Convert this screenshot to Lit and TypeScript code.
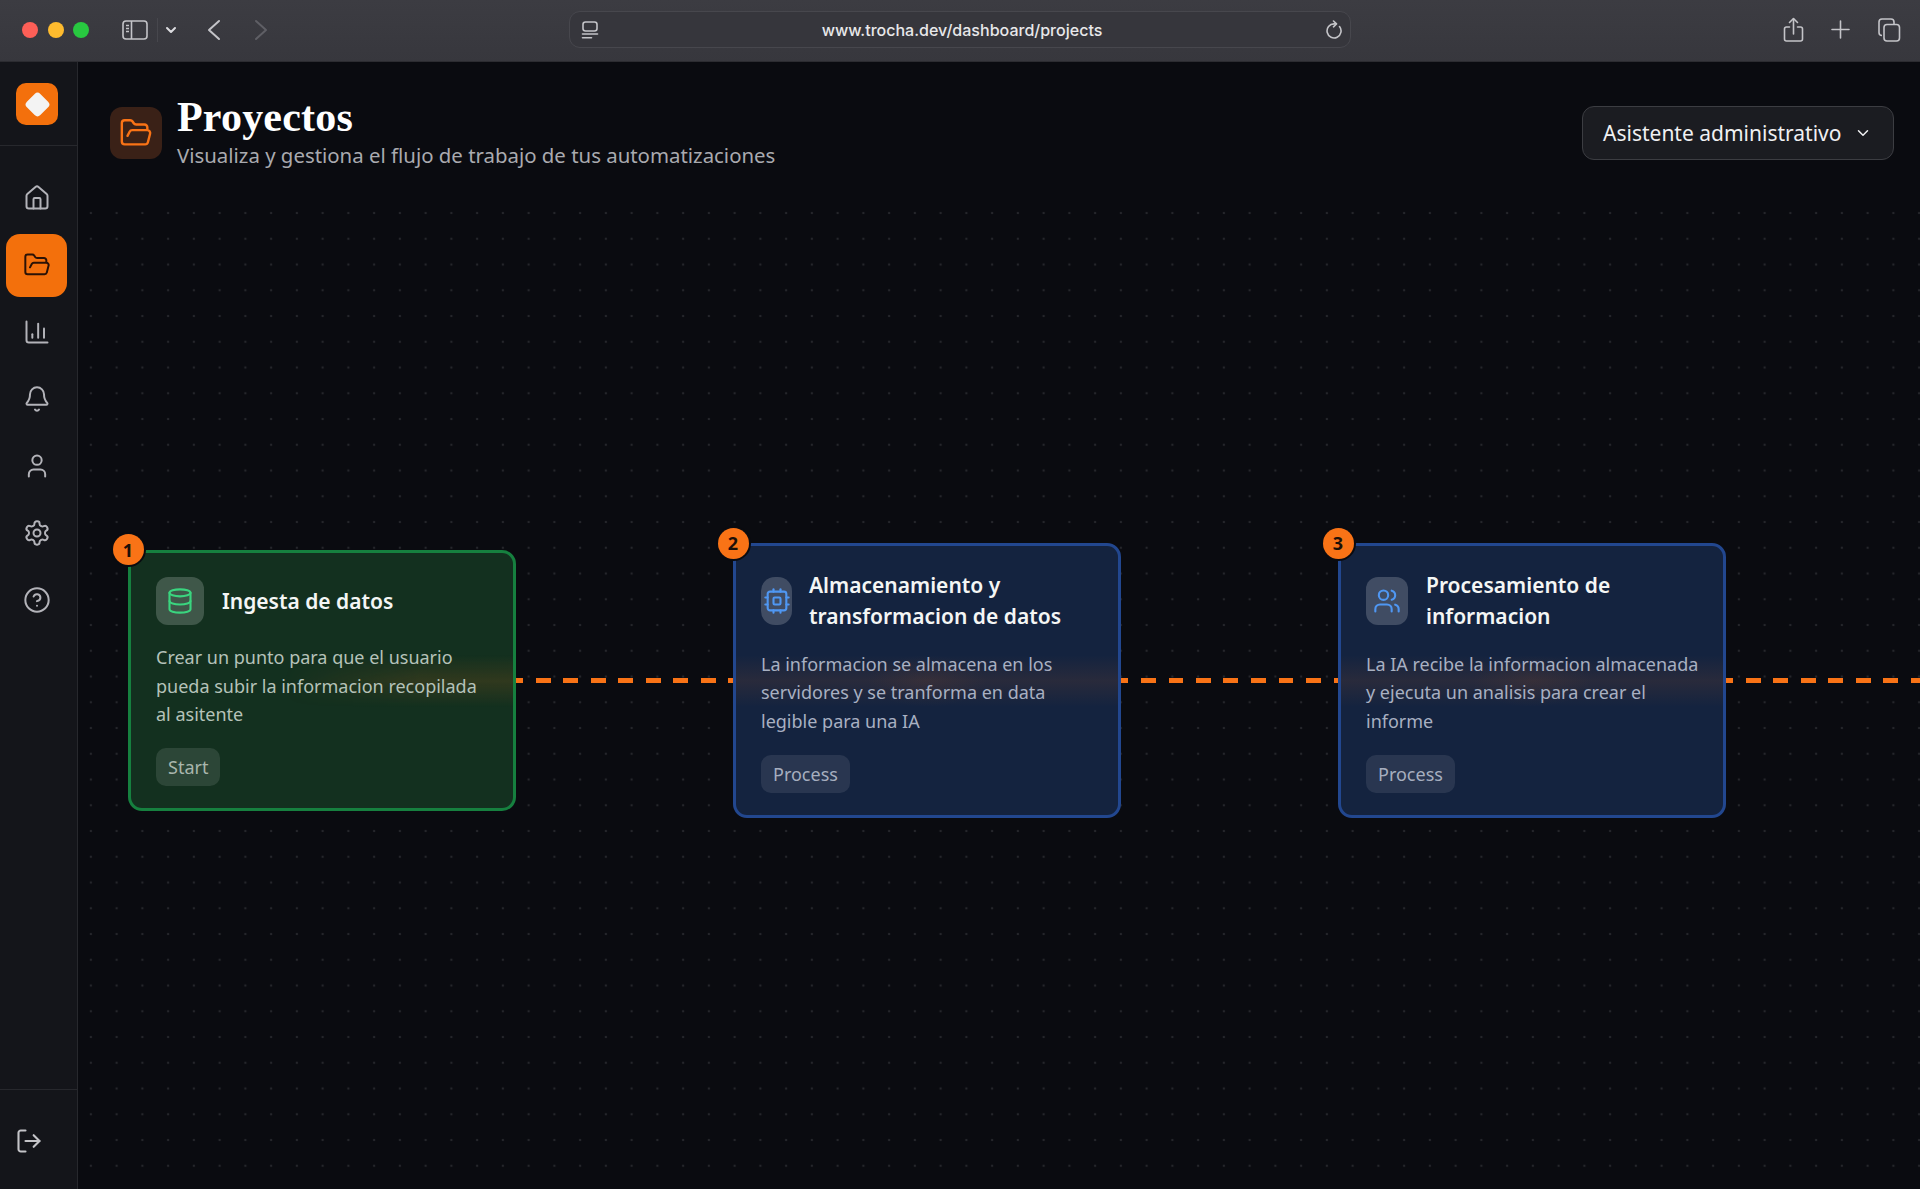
import { LitElement, html, css, svg } from "lit";
import { customElement } from "lit/decorators.js";

const ic = (body: unknown, cls = "") => html`<svg class="ic ${cls}" viewBox="0 0 24 24" fill="none" stroke="currentColor" stroke-width="2" stroke-linecap="round" stroke-linejoin="round">${body}</svg>`;

const folder = svg`<path d="m6 14 1.5-2.9A2 2 0 0 1 9.24 10H20a2 2 0 0 1 1.94 2.5l-1.54 6a2 2 0 0 1-1.95 1.5H4a2 2 0 0 1-2-2V5a2 2 0 0 1 2-2h3.9a2 2 0 0 1 1.69.9l.81 1.2a2 2 0 0 0 1.67.9H18a2 2 0 0 1 2 2v2"/>`;
const house = svg`<path d="M15 21v-8a1 1 0 0 0-1-1h-4a1 1 0 0 0-1 1v8"/><path d="M3 10a2 2 0 0 1 .709-1.528l7-5.999a2 2 0 0 1 2.582 0l7 5.999A2 2 0 0 1 21 10v9a2 2 0 0 1-2 2H5a2 2 0 0 1-2-2z"/>`;
const chart = svg`<path d="M3 3v16a2 2 0 0 0 2 2h16"/><path d="M18 17V9"/><path d="M13 17V5"/><path d="M8 17v-3"/>`;
const bell = svg`<path d="M10.268 21a2 2 0 0 0 3.464 0"/><path d="M3.262 15.326A1 1 0 0 0 4 17h16a1 1 0 0 0 .74-1.673C19.41 13.956 18 12.499 18 8A6 6 0 0 0 6 8c0 4.499-1.411 5.956-2.738 7.326"/>`;
const user = svg`<path d="M19 21v-2a4 4 0 0 0-4-4H9a4 4 0 0 0-4 4v2"/><circle cx="12" cy="7" r="4"/>`;
const gear = svg`<path d="M12.22 2h-.44a2 2 0 0 0-2 2v.18a2 2 0 0 1-1 1.73l-.43.25a2 2 0 0 1-2 0l-.15-.08a2 2 0 0 0-2.73.73l-.22.38a2 2 0 0 0 .73 2.73l.15.1a2 2 0 0 1 1 1.72v.51a2 2 0 0 1-1 1.74l-.15.09a2 2 0 0 0-.73 2.73l.22.38a2 2 0 0 0 2.73.73l.15-.08a2 2 0 0 1 2 0l.43.25a2 2 0 0 1 1 1.73V20a2 2 0 0 0 2 2h.44a2 2 0 0 0 2-2v-.18a2 2 0 0 1 1-1.73l.43-.25a2 2 0 0 1 2 0l.15.08a2 2 0 0 0 2.73-.73l.22-.39a2 2 0 0 0-.73-2.73l-.15-.08a2 2 0 0 1-1-1.74v-.5a2 2 0 0 1 1-1.74l.15-.09a2 2 0 0 0 .73-2.73l-.22-.38a2 2 0 0 0-2.73-.73l-.15.08a2 2 0 0 1-2 0l-.43-.25a2 2 0 0 1-1-1.73V4a2 2 0 0 0-2-2z"/><circle cx="12" cy="12" r="3"/>`;
const help = svg`<circle cx="12" cy="12" r="10"/><path d="M9.09 9a3 3 0 0 1 5.83 1c0 2-3 3-3 3"/><path d="M12 17h.01"/>`;
const logout = svg`<path d="M9 21H5a2 2 0 0 1-2-2V5a2 2 0 0 1 2-2h4"/><polyline points="16 17 21 12 16 7"/><line x1="21" y1="12" x2="9" y2="12"/>`;
const database = svg`<ellipse cx="12" cy="5" rx="9" ry="3"/><path d="M3 5V19A9 3 0 0 0 21 19V5"/><path d="M3 12A9 3 0 0 0 21 12"/>`;
const cpu = svg`<rect x="4" y="4" width="16" height="16" rx="2"/><rect x="9" y="9" width="6" height="6" rx="1"/><path d="M15 2v2"/><path d="M15 20v2"/><path d="M2 15h2"/><path d="M2 9h2"/><path d="M20 15h2"/><path d="M20 9h2"/><path d="M9 2v2"/><path d="M9 20v2"/>`;
const users = svg`<path d="M16 21v-2a4 4 0 0 0-4-4H6a4 4 0 0 0-4 4v2"/><circle cx="9" cy="7" r="4"/><path d="M22 21v-2a4 4 0 0 0-3-3.87"/><path d="M16 3.13a4 4 0 0 1 0 7.75"/>`;
const chevron = svg`<path d="m6 9 6 6 6-6"/>`;

const NAV = [house, folder, chart, bell, user, gear, help];

const CARDS = [
  { n: 1, kind: "green", icon: database, box: "b48", title: "Ingesta de datos", desc: "Crear un punto para que el usuario pueda subir la informacion recopilada al asitente", tag: "Start" },
  { n: 2, kind: "blue", icon: cpu, box: "b31", title: "Almacenamiento y transformacion de datos", desc: "La informacion se almacena en los servidores y se tranforma en data legible para una IA", tag: "Process" },
  { n: 3, kind: "blue", icon: users, box: "b42", title: "Procesamiento de informacion", desc: "La IA recibe la informacion almacenada y ejecuta un analisis para crear el informe", tag: "Process" },
];

@customElement("app-root")
export class AppRoot extends LitElement {
  static styles = css`
    :host { display: block; width: 100%; height: 100vh; font-family: "Noto Sans", sans-serif; background: #0a0b10; color: #fff; overflow: hidden; }
    .ic { display: block; flex: none; }

    .toolbar { height: 62px; box-sizing: border-box; padding-bottom: 3px; display: grid; grid-template-columns: 569px 782px 1fr; align-items: center; background: linear-gradient(#3c3c42, #37373d); box-shadow: inset 0 -1px 0 #2c2c31; color: #c4c4c8; }
    .tl { display: flex; align-items: center; padding-left: 22px; }
    .lights { display: flex; gap: 9.5px; }
    .light { width: 16px; height: 16px; border-radius: 50%; }
    .red { background: #fd5f57; } .yellow { background: #febb2e; } .green-l { background: #28c840; }
    .tb-side { width: 26px; height: 20px; margin-left: 33px; }
    .tb-sep { width: 1px; height: 24px; background: #47474d; margin-left: 9px; }
    .tb-chev { width: 12px; height: 12px; margin-left: 7px; color: #dcdce0; }
    .tb-back { width: 14px; height: 22px; margin-left: 30px; }
    .tb-fwd { width: 14px; height: 22px; margin-left: 33px; color: #5f5f65; }
    .url { height: 37px; border: 1.5px solid #47474d; border-radius: 11px; box-sizing: border-box; display: flex; align-items: center; padding: 0 7px 0 11px; background: #36363c; }
    .url-ic { width: 18px; height: 18px; }
    .url-text { flex: 1; text-align: center; font-family: Inter, "Liberation Sans", sans-serif; font-weight: 500; font-size: 16.05px; color: #e8e8ea; }
    .reload { width: 18px; height: 19px; }
    .tr { display: flex; align-items: center; justify-content: flex-end; padding-right: 19px; gap: 27px; }
    .share { width: 21px; height: 26px; }
    .plus { width: 19px; height: 19px; }
    .tabs { width: 24px; height: 24px; }

    .body { display: flex; height: 1127px; }
    .side { width: 78px; flex: none; box-sizing: border-box; border-right: 1px solid #27282d; background: #14151a; display: flex; flex-direction: column; color: #b3b3b9; }
    .brand { height: 84px; box-sizing: border-box; flex: none; border-bottom: 1px solid #27282d; padding: 21px 0 0 16px; }
    .logo { width: 42px; height: 42px; border-radius: 10px; background: #f3700c; display: flex; align-items: center; justify-content: center; }
    .logo i { width: 19px; height: 19px; background: #f3f3f3; border-radius: 4px; transform: rotate(45deg); display: block; }
    .nav { display: flex; flex-direction: column; gap: 4px; padding: 21px 10px 0 6px; }
    .item { height: 63px; box-sizing: border-box; padding-bottom: 2px; border-radius: 14px; display: flex; align-items: center; justify-content: center; }
    .item .ic { width: 28px; height: 28px; stroke-width: 1.7; }
    .item.on { background: #f3700c; color: #2a1206; }
    .bottom { margin-top: auto; height: 100px; box-sizing: border-box; flex: none; border-top: 1px solid #27282d; padding: 37px 0 0 15px; color: #c4c4c8; }
    .bottom .ic { width: 28px; height: 28px; stroke-width: 1.8; }

    .main { flex: 1; min-width: 0; display: flex; flex-direction: column; }
    .head { height: 110px; flex: none; box-sizing: border-box; padding: 35px 26px 0 32px; display: flex; align-items: flex-start; }
    .hicon { width: 52px; height: 52px; margin-top: 10px; border-radius: 12px; background: #3a2117; color: #f97316; display: flex; align-items: center; justify-content: center; flex: none; }
    .hicon .ic { width: 34px; height: 34px; stroke-width: 1.7; }
    .htext { margin-left: 15px; flex: 1; }
    h1 { margin: 0; font-family: "Liberation Serif", serif; font-weight: 700; font-size: 42px; line-height: 40px; letter-spacing: 0.2px; color: #fff; }
    .sub { margin-top: 4px; font-size: 20.4px; line-height: 28px; color: #a9aaaf; white-space: nowrap; }
    .select { width: 312px; height: 54px; margin-top: 9px; box-sizing: border-box; border: 1.5px solid #3c3d42; border-radius: 12px; background: #1b1c21; padding: 0 21px 0 20px; display: flex; align-items: center; justify-content: space-between; font-size: 21px; color: #f0f0f2; white-space: nowrap; }
    .select .ic { width: 18px; height: 18px; }

    .canvas { position: relative; flex: 1; display: flex; align-items: center; gap: 217px; padding-left: 50px; overflow: hidden;
      background-color: #0a0b10;
      background-image: linear-gradient(#0a0b10 30px, transparent 30px), radial-gradient(circle, #25262b 1.1px, transparent 1.6px);
      background-size: 100% 100%, 25.75px 25.75px;
      background-position: 0 0, 0 2.4px; }
    .line { position: absolute; top: calc(50% - 2.5px); left: 238px; right: 0; height: 5px; background-image: repeating-linear-gradient(90deg, #f97316 0 14.5px, transparent 14.5px 27.5px); }
    .card { position: relative; width: 388px; flex: none; box-sizing: border-box; border: 3px solid; border-radius: 14px; padding: 24px 24px 22px 25px; }
    .card::before { content: ""; position: absolute; left: 0; right: 0; top: calc(50% - 26px); height: 52px; pointer-events: none; }
    .card.green { background: #13301f; border-color: #16803f; --desc: #b5c2b9; --boxbg: rgba(255,255,255,.19); --tag: rgba(255,255,255,.11); --tagc: #a9b6ad; --ic: #3ad57f; }
    .card.green::before { left: 40%; background: linear-gradient(rgba(249,115,22,0), rgba(249,115,22,.13), rgba(249,115,22,0)); -webkit-mask-image: linear-gradient(90deg, transparent, #000 60%); mask-image: linear-gradient(90deg, transparent, #000 60%); }
    .card.blue { background: #14233f; border-color: #22478f; --desc: #a8b0c2; --boxbg: rgba(255,255,255,.19); --tag: rgba(255,255,255,.09); --tagc: #a6aebf; --ic: #4f97f3; }
    .card.blue::before { background: radial-gradient(ellipse 60px 26px at 50% 50%, rgba(249,115,22,.07), transparent), linear-gradient(rgba(249,115,22,0), rgba(249,115,22,.09), rgba(249,115,22,0)); }
    .card > * { position: relative; }
    .badge { position: absolute !important; left: -18.5px; top: -18.5px; width: 31px; height: 31px; border-radius: 50%; background: #f97316; color: #1d1008; font-weight: 700; font-size: 18px; display: flex; align-items: center; justify-content: center; box-shadow: 0 0 0 2px #0a0b10; }
    .chead { display: flex; align-items: center; gap: 18px; }
    .cbox { height: 48px; flex: none; border-radius: 12px; background: var(--boxbg); color: var(--ic); display: flex; align-items: center; justify-content: center; }
    .b48 { width: 48px; } .b31 { width: 31px; border-radius: 14px; margin-right: -1px; } .b42 { width: 42px; }
    .cbox .ic { width: 28px; height: 28px; stroke-width: 1.8; }
    h3 { margin: 0; font-size: 21px; font-weight: 600; line-height: 30.5px; color: #f4f6f5; }
    .desc { margin: 18.5px 0 19.5px; font-size: 18px; line-height: 28.4px; color: var(--desc); }
    .tag { display: inline-flex; align-items: center; height: 38px; padding: 0 12px; border-radius: 10px; background: var(--tag); color: var(--tagc); font-size: 18px; vertical-align: top; }
  `;

  render() {
    return html`
      <div class="toolbar">
        <div class="tl">
          <div class="lights"><span class="light red"></span><span class="light yellow"></span><span class="light green-l"></span></div>
          <svg class="tb-side" viewBox="0 0 26 20" fill="none" stroke="currentColor" stroke-width="1.6"><rect x="1" y="1" width="24" height="18" rx="3"/><path d="M9.5 1v18"/><path d="M4 5.5h3M4 8.5h3M4 11.5h3" stroke-width="1.4"/></svg>
          <span class="tb-sep"></span>
          <svg class="tb-chev" viewBox="0 0 12 12" fill="none" stroke="currentColor" stroke-width="2" stroke-linecap="round" stroke-linejoin="round"><path d="m2 4 4 4 4-4"/></svg>
          <svg class="tb-back" viewBox="0 0 14 22" fill="none" stroke="currentColor" stroke-width="2" stroke-linecap="round" stroke-linejoin="round"><path d="M12 2 2 11l10 9"/></svg>
          <svg class="tb-fwd" viewBox="0 0 14 22" fill="none" stroke="currentColor" stroke-width="2" stroke-linecap="round" stroke-linejoin="round"><path d="m2 2 10 9-10 9"/></svg>
        </div>
        <div class="url">
          <svg class="url-ic" viewBox="0 0 18 18" fill="none" stroke="currentColor" stroke-width="1.6" stroke-linecap="round"><rect x="2" y="1" width="14" height="9" rx="2.5"/><path d="M1.5 13h15"/><path d="M1.5 16.8h9" /></svg>
          <span class="url-text">www.trocha.dev/dashboard/projects</span>
          <svg class="reload" viewBox="0 0 18 19" fill="none" stroke="currentColor" stroke-width="1.6" stroke-linecap="round" stroke-linejoin="round"><path d="M14.5 6.5a7 7 0 1 1-5.5-2.6h2"/><path d="M8.5 1 11.5 3.9 8.5 6.8"/></svg>
        </div>
        <div class="tr">
          <svg class="share" viewBox="0 0 21 26" fill="none" stroke="currentColor" stroke-width="1.6" stroke-linecap="round" stroke-linejoin="round"><path d="M6.5 10H3.5a2 2 0 0 0-2 2v10a2 2 0 0 0 2 2h14a2 2 0 0 0 2-2V12a2 2 0 0 0-2-2h-3"/><path d="M10.5 17V2"/><path d="M6.5 5.5 10.5 1.5l4 4"/></svg>
          <svg class="plus" viewBox="0 0 19 19" fill="none" stroke="currentColor" stroke-width="1.6" stroke-linecap="round"><path d="M9.5 1v17M1 9.5h17"/></svg>
          <svg class="tabs" viewBox="0 0 24 24" fill="none" stroke="currentColor" stroke-width="1.6" stroke-linejoin="round"><path d="M5 17.5a3 3 0 0 1-3-3V4a3 3 0 0 1 3-3h9a3 3 0 0 1 3 3v2.5"/><rect x="7" y="6.5" width="15.5" height="16.5" rx="3"/></svg>
        </div>
      </div>
      <div class="body">
        <aside class="side">
          <div class="brand"><div class="logo"><i></i></div></div>
          <nav class="nav">
            ${NAV.map((p, i) => html`<div class="item ${i === 1 ? "on" : ""}">${ic(p)}</div>`)}
          </nav>
          <div class="bottom">${ic(logout)}</div>
        </aside>
        <main class="main">
          <header class="head">
            <div class="hicon">${ic(folder)}</div>
            <div class="htext">
              <h1>Proyectos</h1>
              <div class="sub">Visualiza y gestiona el flujo de trabajo de tus automatizaciones</div>
            </div>
            <div class="select"><span>Asistente administrativo</span>${ic(chevron)}</div>
          </header>
          <section class="canvas">
            <div class="line"></div>
            ${CARDS.map((c) => html`
              <article class="card ${c.kind}">
                <span class="badge">${c.n}</span>
                <div class="chead">
                  <div class="cbox ${c.box}">${ic(c.icon)}</div>
                  <h3>${c.title}</h3>
                </div>
                <p class="desc">${c.desc}</p>
                <span class="tag">${c.tag}</span>
              </article>
            `)}
          </section>
        </main>
      </div>
    `;
  }
}
